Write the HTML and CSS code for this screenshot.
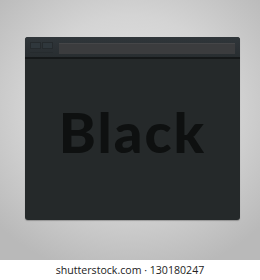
FILE: index.html
```html
<!DOCTYPE html>
<html>
<head>
<meta charset="utf-8">
<link rel="stylesheet" href="styles.css">
</head>
<body>
<div class="stage">
  <div class="window">
    <div class="titlebar">
      <div class="buttons"><span class="btn"></span><span class="btn"></span></div>
      <div class="address"></div>
    </div>
    <div class="content">
      <div class="word">Black</div>
    </div>
  </div>
</div>
<div class="footer">shutterstock.com · 130180247</div>
</body>
</html>
```
FILE: styles.css
```css
html, body { margin: 0; padding: 0; }
body { width: 260px; height: 280px; overflow: hidden; background: #fff; }
.stage {
  height: 260px;
  box-sizing: border-box;
  padding: 37px 20px 0 25px;
  background: radial-gradient(ellipse 70% 65% at 50% 42%, #e6e6e6 0%, #d4d4d4 55%, #b9b9b9 100%);
}
.window {
  width: 215px;
  height: 183px;
  border-radius: 3px;
  background: #25292a;
  display: flex;
  flex-direction: column;
  overflow: hidden;
  box-shadow: 0 1px 1px rgba(0,0,0,0.25);
}
.titlebar {
  background: linear-gradient(#30363a, #282d30);
  border-bottom: 2px solid #151819;
  display: flex;
  align-items: flex-start;
  padding: 4px 5px 0 5px;
  height: 16px;
  gap: 6px;
}
.buttons {
  display: flex;
  gap: 1px;
  margin-top: 1px;
  border-bottom: 1px solid #262b2e;
  padding-bottom: 3px;
}
.btn {
  width: 11px;
  height: 7px;
  background: #2f373c;
  border: 1px solid #252a2d;
  box-sizing: border-box;
}
.address {
  flex: 1;
  height: 10px;
  margin-top: 2px;
  background: #3b3c3e;
  border-top: 1px solid #454648;
}
.content {
  flex: 1;
  display: flex;
  justify-content: center;
  padding-top: 45px;
}
.word {
  font-family: Lato, sans-serif;
  font-weight: 900;
  font-size: 56px;
  line-height: 56px;
  color: #0e1010;
  letter-spacing: 2px;
  margin-left: 0;
}
.footer {
  height: 20px;
  font-family: "Open Sans", sans-serif;
  font-size: 10.6px;
  line-height: 20px;
  color: #222;
  text-align: center;
}
```
